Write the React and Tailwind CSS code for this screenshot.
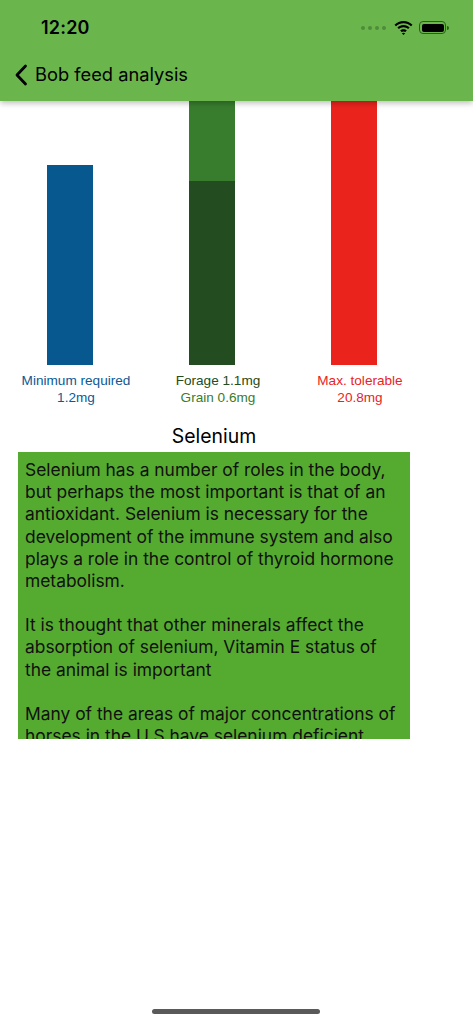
import React from "react";

const bars = [
  {
    key: "min",
    segs: [{ h: 200, c: "bg-[#07588f]" }],
    lines: [
      { t: "Minimum required", c: "text-[#0b5a94]" },
      { t: "1.2mg", c: "text-[#0b5a94]" },
    ],
  },
  {
    key: "feed",
    segs: [
      { h: 80, c: "bg-[#387d2e]" },
      { h: 184, c: "bg-[#234c20]" },
    ],
    lines: [
      { t: "Forage 1.1mg", c: "text-[#234c20]" },
      { t: "Grain 0.6mg", c: "text-[#387d2e]" },
    ],
  },
  {
    key: "max",
    segs: [{ h: 264, c: "bg-[#ea231d]" }],
    lines: [
      { t: "Max. tolerable", c: "text-[#ea231d]" },
      { t: "20.8mg", c: "text-[#ea231d]" },
    ],
  },
];

function Wifi() {
  return (
    <svg width="19" height="14" viewBox="0 0 19 14">
      <path d="M9.5 2.2c2.9 0 5.5 1.1 7.5 3l1.5-1.5C16.1 1.4 12.9 0 9.5 0S2.9 1.4.5 3.7L2 5.2c2-1.9 4.6-3 7.5-3z" fill="#000" />
      <path d="M9.5 6.3c1.8 0 3.4.7 4.6 1.8l1.5-1.5C14 5 11.9 4.1 9.5 4.1S5 5 3.4 6.6l1.5 1.5C6.1 7 7.7 6.3 9.5 6.3z" fill="#000" />
      <path d="M9.5 10.4c.7 0 1.3.3 1.8.7l1.5-1.5c-.9-.8-2-1.3-3.3-1.3s-2.4.5-3.3 1.3l1.5 1.5c.5-.4 1.1-.7 1.8-.7zM9.5 14l1.7-1.7c-.4-.4-1-.6-1.7-.6s-1.3.2-1.7.6z" fill="#000" />
    </svg>
  );
}

function Battery() {
  return (
    <div className="flex items-center">
      <div className="w-[27px] h-[13px] rounded-[4px] border border-[#2f5a22] p-[1.5px]">
        <div className="w-full h-full rounded-[2px] bg-black" />
      </div>
      <div className="w-[2px] h-[4px] rounded-r-sm bg-[#2f5a22] ml-[1px]" />
    </div>
  );
}

export default function App() {
  return (
    <div
      className="relative w-[473px] h-[1024px] bg-white overflow-hidden"
      style={{ fontFamily: "Inter, 'Noto Sans', sans-serif" }}
    >
      <header className="relative z-10 h-[101px] bg-[#6bb64c] shadow-[0_2px_6px_rgba(0,0,0,0.28)] flex flex-col">
        <div className="h-[52px] flex items-center justify-between pl-[41px] pr-[24px] pt-[3px]">
          <span className="text-[18px] font-semibold text-black tracking-[0.2px]">12:20</span>
          <div className="flex items-center gap-[6px]">
            <div className="flex gap-[3px] mr-[2px]">
              <span className="w-[4px] h-[4px] rounded-full bg-[#4e8c3a]" />
              <span className="w-[4px] h-[4px] rounded-full bg-[#4e8c3a]" />
              <span className="w-[4px] h-[4px] rounded-full bg-[#4e8c3a]" />
              <span className="w-[4px] h-[4px] rounded-full bg-[#4e8c3a]" />
            </div>
            <Wifi />
            <Battery />
          </div>
        </div>
        <div className="flex items-center h-[46px] pl-[14px]">
          <svg width="14" height="22" viewBox="0 0 14 22" className="mr-[7px]">
            <path d="M11.5 2 L3 11 L11.5 20" stroke="#000" strokeWidth="2.8" fill="none" strokeLinecap="round" strokeLinejoin="round" />
          </svg>
          <span className="text-[18.3px] text-black">Bob feed analysis</span>
        </div>
      </header>

      <div className="flex pl-[5px]">
        {bars.map((b) => (
          <div key={b.key} className="w-[142px] flex flex-col">
            <div className="h-[264px] flex flex-col justify-end pl-[42px]">
              {b.segs.map((s, i) => (
                <div key={i} className={`w-[46px] ${s.c}`} style={{ height: s.h }} />
              ))}
            </div>
            <div
              className="mt-[7px] flex flex-col items-center text-[13.6px] leading-[17px]"
              style={{ fontFamily: "'Liberation Sans', Arial, sans-serif" }}
            >
              {b.lines.map((l, i) => (
                <span key={i} className={l.c}>
                  {l.t}
                </span>
              ))}
            </div>
          </div>
        ))}
      </div>

      <div className="w-[392px] ml-[18px] mt-[18px] flex flex-col">
        <h2 className="text-center text-[19.4px] leading-[24px] text-black">Selenium</h2>
        <div className="mt-[4px] h-[287px] bg-[#55ab2f] overflow-hidden pl-[7px] pr-[10px] pt-[7px] text-[17.4px] leading-[22.2px] text-[#111]">
          <p>
            Selenium has a number of roles in the body, but perhaps the most important is that of an
            antioxidant. Selenium is necessary for the development of the immune system and also
            plays a role in the control of thyroid hormone metabolism.
          </p>
          <p className="mt-[22px]">
            It is thought that other minerals affect the absorption of selenium, Vitamin E status of
            the animal is important
          </p>
          <p className="mt-[22px]">
            Many of the areas of major concentrations of horses in the U.S have selenium deficient
            soils and forages.
          </p>
        </div>
      </div>

      <div className="absolute left-[152px] top-[1009px] w-[168px] h-[5px] rounded-full bg-[#5a5a5a]" />
    </div>
  );
}
